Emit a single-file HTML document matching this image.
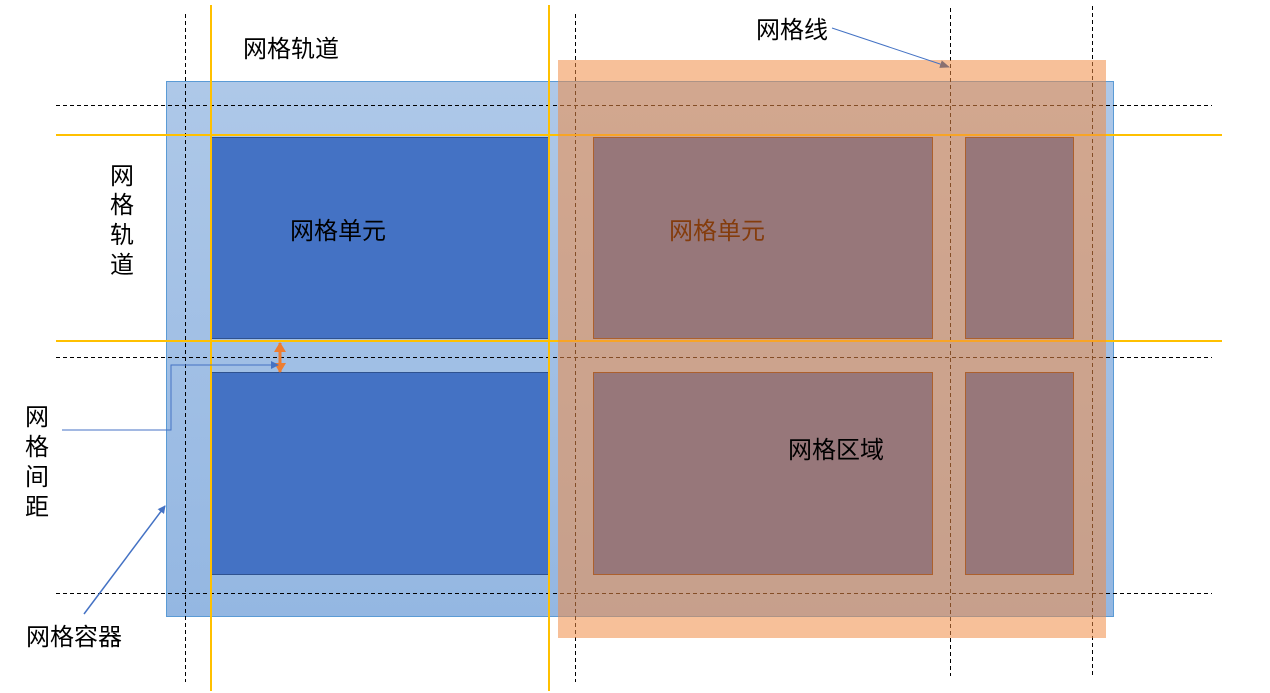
<!DOCTYPE html>
<html><head><meta charset="utf-8"><style>
html,body{margin:0;padding:0;background:#fff;}
svg{display:block;}
text{font-family:"Liberation Sans","Noto Sans CJK SC",sans-serif;font-size:24px;fill:#000;}
</style></head><body>
<svg width="1270" height="693" viewBox="0 0 1270 693" xmlns="http://www.w3.org/2000/svg">
<defs>
<linearGradient id="g" x1="0" y1="0" x2="0" y2="1">
<stop offset="0" stop-color="#aec8e8"/><stop offset="1" stop-color="#94b7e2"/>
</linearGradient>
<marker id="ab" markerWidth="8" markerHeight="8" refX="7" refY="4" orient="auto" markerUnits="userSpaceOnUse"><path d="M0,0L8,4L0,8z" fill="#4472c4"/></marker>
<marker id="ag" markerWidth="10" markerHeight="8" refX="9" refY="4" orient="auto" markerUnits="userSpaceOnUse"><path d="M0,0L10,4L0,8z" fill="#8a7070"/></marker>
<marker id="ao" markerWidth="10" markerHeight="12" refX="9" refY="6" orient="auto-start-reverse" markerUnits="userSpaceOnUse"><path d="M0,0L10,6L0,12z" fill="#ed7d31"/></marker>
</defs>
<rect x="166.5" y="81.5" width="947" height="535" fill="url(#g)" stroke="#5b9bd5" stroke-width="1"/>
<g fill="#4472c4" stroke="#2f528f" stroke-width="1">
<rect x="211.5" y="137.5" width="337" height="201"/>
<rect x="211.5" y="372.5" width="337" height="202"/>
</g>
<g fill="#2c5dba" stroke="#5a2a10" stroke-width="1">
<rect x="593.5" y="137.5" width="339" height="201"/>
<rect x="965.5" y="137.5" width="108" height="201"/>
<rect x="593.5" y="372.5" width="339" height="202"/>
<rect x="965.5" y="372.5" width="108" height="202"/>
</g>
<g stroke="#000" stroke-width="1" stroke-dasharray="4,3">
<line x1="56" y1="105.5" x2="1212" y2="105.5"/>
<line x1="56" y1="357.5" x2="1212" y2="357.5"/>
<line x1="56" y1="593.5" x2="1212" y2="593.5"/>
<line x1="185.5" y1="14" x2="185.5" y2="682"/>
<line x1="575.5" y1="14" x2="575.5" y2="682"/>
<line x1="950.5" y1="8" x2="950.5" y2="676"/>
<line x1="1092.5" y1="6" x2="1092.5" y2="676"/>
</g>
<g stroke="#ffc000" stroke-width="2">
<line x1="56" y1="135" x2="1222" y2="135"/>
<line x1="56" y1="341" x2="1222" y2="341"/>
<line x1="211" y1="5" x2="211" y2="691"/>
<line x1="549" y1="5" x2="549" y2="691"/>
</g>
<rect x="558" y="60" width="548" height="578" fill="rgba(240,140,70,0.55)"/>
<line x1="280" y1="343" x2="280" y2="372" stroke="#ed7d31" stroke-width="3" marker-start="url(#ao)" marker-end="url(#ao)"/>
<polyline points="62,430 171,430 171,365 278,365" fill="none" stroke="#4472c4" stroke-width="1" marker-end="url(#ab)"/>
<line x1="84" y1="614" x2="165" y2="506" stroke="#4472c4" stroke-width="1.5" marker-end="url(#ab)"/>
<line x1="832" y1="28" x2="949" y2="67" stroke="#4472c4" stroke-width="1" marker-end="url(#ag)"/>
<text x="243" y="57">网格轨道</text>
<text x="756" y="38">网格线</text>
<text x="110" y="184">网</text><text x="110" y="213">格</text><text x="110" y="243">轨</text><text x="110" y="273">道</text>
<text x="25" y="425">网</text><text x="25" y="455">格</text><text x="25" y="485">间</text><text x="25" y="515">距</text>
<text x="290" y="239">网格单元</text>
<text x="669" y="239" style="fill:#843c0c">网格单元</text>
<text x="788" y="458">网格区域</text>
<text x="26" y="645">网格容器</text>
</svg>
</body></html>
